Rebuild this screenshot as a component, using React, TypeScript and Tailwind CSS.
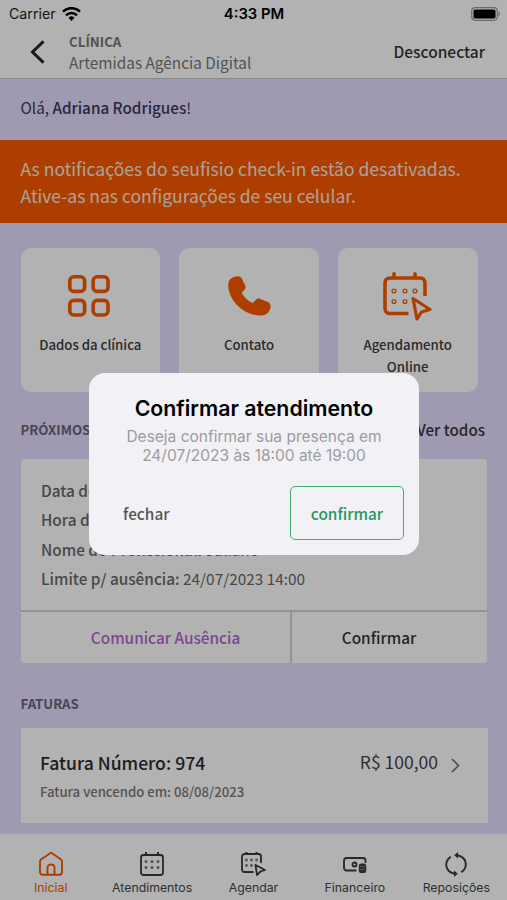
import React from "react";

const sans = "font-['Noto_Sans_CJK_JP','Noto_Sans_CJK_SC',sans-serif]";
const system = "font-['Inter',sans-serif]";

function Grid() {
  return (
    <svg className="mr-[3px] mb-1" width="42" height="42" viewBox="0 0 42 42" fill="none" stroke="#fa5800" strokeWidth="3.6">
      <rect x="1.8" y="1.8" width="14.8" height="14.6" rx="4" />
      <rect x="25.2" y="1.8" width="14.8" height="14.6" rx="4" />
      <rect x="1.8" y="25.4" width="14.8" height="14.6" rx="4" />
      <rect x="25.2" y="25.4" width="14.8" height="14.6" rx="4" />
    </svg>
  );
}

function Phone() {
  return (
    <svg className="mb-[3px] ml-[2px]" width="43" height="40" viewBox="0 0 43 40" fill="#fa5800">
      <path d="M6.5.8C9.5-.3 12.6.2 13.8 2.6l3.4 7c.8 1.700.4 3.300-1 4.600l-2.500 2.300c2.300 4.900 6 8.300 11 10.600l3-3.200c1.300-1.400 2.900-1.700 4.700-1l7.500 3.100c2.300 1 3.100 3.200 2.600 5.400-1 4.700-4.100 7.800-9 8C16.700 40 .6 25.500.2 9.300.1 5 2.500 2.200 6.500.8Z" />
    </svg>
  );
}

function AgendaPointer() {
  return (
    <svg className="mb-[2px]" width="50" height="49" viewBox="0 0 50 49" fill="none" stroke="#fa5800" strokeWidth="3.600" strokeLinecap="round" strokeLinejoin="round">
      <path d="M25.500 41.500H7c-3 0-5-2-5-5V11c0-3 2-5 5-5h30c3 0 5 2 5 5v13" strokeLinecap="butt" />
      <path d="M11 1.800V5M32 1.800V5" />
      <g strokeWidth="1.300">
        <circle cx="11" cy="19" r="1.900" /><circle cx="22" cy="19" r="1.900" /><circle cx="32" cy="19" r="1.900" />
        <circle cx="11" cy="29.500" r="1.900" /><circle cx="22" cy="29.500" r="1.900" />
      </g>
      <path d="M30 26.500 47 37.500 38.500 40 34 47Z" strokeWidth="3.200" />
    </svg>
  );
}

function HomeIcon() {
  return (
    <svg width="24" height="24" viewBox="0 0 24 24" fill="none" stroke="#fa5800" strokeWidth="1.900" strokeLinejoin="round">
      <path d="M1 9.500c0-.8.3-1.500 1-2L11 1.200c.6-.4 1.400-.4 2 0l9 6.300c.7.500 1 1.200 1 2V20c0 1.700-1 2.700-2.700 2.700H3.700C2 22.700 1 21.700 1 20Z" />
      <path d="M8.500 22.500V16c0-2 1.300-3.500 3.500-3.500s3.500 1.500 3.500 3.500v6.500" />
    </svg>
  );
}

function CalendarIcon() {
  return (
    <svg width="24" height="24" viewBox="0 0 24 24" fill="none" stroke="#3a3a3a" strokeWidth="1.800">
      <rect x="1" y="3" width="22" height="20" rx="2.500" />
      <path d="M6 0v3M18 0v3" strokeWidth="2" />
      <g fill="#777" stroke="none">
        {[6, 12, 18].map((x) => <React.Fragment key={x}><circle cx={x} cy="9.500" r="1.500" /><circle cx={x} cy="15.500" r="1.500" /></React.Fragment>)}
      </g>
    </svg>
  );
}

function ScheduleIcon() {
  return (
    <svg width="25" height="24" viewBox="0 0 25 24" fill="none" stroke="#3a3a3a" strokeWidth="1.800" strokeLinejoin="round">
      <path d="M12.500 20H3.500C2 20 1 19 1 17.500V4.500C1 3 2 2 3.500 2h14C19 2 20 3 20 4.500V11" />
      <path d="M5.500 0v2M15.500 0v2" strokeWidth="2" />
      <g fill="#777" stroke="none">
        {[5.5, 10.5, 15.5].map((x) => <circle key={x} cx={x} cy="8" r="1.400" />)}
        <circle cx="5.500" cy="13.500" r="1.400" /><circle cx="10.500" cy="13.500" r="1.400" />
      </g>
      <path d="M14.500 13 24 18l-4.500 1.500L16 23Z" />
    </svg>
  );
}

function MoneyIcon() {
  return (
    <svg className="mt-[2px]" width="24" height="16" viewBox="0 0 24 16" fill="none" stroke="#3a3a3a" strokeWidth="1.800">
      <path d="M13.500 13.500H3.500C2 13.500 1 12.500 1 11v-7.500C1 2 2 1 3.500 1H20c1.500 0 2.500 1 2.500 2.500V6" />
      <circle cx="11.500" cy="7.500" r="2" />
      <rect x="15.800" y="6.500" width="7.400" height="9.500" rx="2.600" fill="#3a3a3a" stroke="none" />
      <path d="M17 9.300c1.500.7 3.500.7 5 0M17 12.200c1.500.7 3.500.7 5 0" stroke="#aaa" strokeWidth=".7" />
    </svg>
  );
}

function RefreshIcon() {
  return (
    <svg width="22" height="25" viewBox="0 0 22 25" fill="none" stroke="#3a3a3a" strokeWidth="1.900">
      <path d="M5.800 4.700C-1 9.500-.5 19.500 9.500 21.700M16.200 20.300C23 15.500 22.500 5.500 12.500 3.300" />
      <path d="M13 0V6.400L9.200 3.200ZM9 18.600V25L12.800 21.800Z" fill="#3a3a3a" stroke="none" />
    </svg>
  );
}

function Shortcut({ children, label }: { children: React.ReactNode; label: React.ReactNode }) {
  return (
    <div className="flex h-36 flex-col items-center rounded-[10px] bg-white">
      <div className="flex h-[86px] items-end justify-center pb-[10px]"><div className="flex h-[53px] items-center">{children}</div></div>
      <div className="text-center text-[13.2px] leading-[22px] font-medium text-[#3b3b3d]">{label}</div>
    </div>
  );
}

function Tab({ icon, label, active }: { icon: React.ReactNode; label: string; active?: boolean }) {
  return (
    <div className={`flex flex-col items-center ${active ? "text-[#fa5800]" : "text-[#444]"}`}>
      <div className="mt-4 flex h-7 items-center">{icon}</div>
      <span className="mt-[2px] text-[12.3px] leading-4 whitespace-nowrap">{label}</span>
    </div>
  );
}

export default function App() {
  return (
    <div className={`relative flex h-[900px] w-[507px] flex-col overflow-hidden bg-[#e4ddfe] ${sans}`}>
      <header className="h-[79px] shrink-0 border-b-[1.5px] border-[#c4c4c4] bg-white">
        <div className={`grid h-7 grid-cols-3 items-center pr-[6px] pl-[9px] ${system}`}>
          <div className="flex items-center gap-[6px] text-[14.2px] text-[#222]">
            Carrier
            <svg width="19" height="14" viewBox="0 0 19 14" fill="none" stroke="black" strokeWidth="2.600">
              <path d="M1 4.700a12 12 0 0 1 17 0M4 8.300a7.800 7.800 0 0 1 11 0" /><path d="m9.500 14-3-3.200a4.300 4.300 0 0 1 6 0Z" fill="black" stroke="none" />
            </svg>
          </div>
          <div className="-ml-[2px] text-center text-[14.8px] font-semibold whitespace-nowrap">4:33 PM</div>
          <svg className="justify-self-end" width="30" height="14" viewBox="0 0 30 14">
            <rect x=".7" y=".7" width="25.600" height="12.600" rx="3.500" fill="none" stroke="#999" strokeWidth="1.200" />
            <rect x="2.500" y="2.500" width="22" height="9" rx="1.500" /><path d="M27.500 4.500c2 1 2 4 0 5Z" fill="#999" />
          </svg>
        </div>
        <div className="flex h-12 items-center pr-[22px] pl-[30px]">
          <svg width="15" height="24" viewBox="0 0 15 24" fill="none" stroke="#252525" strokeWidth="3"><path d="M13.500 1.300 2.500 12l11 10.700" /></svg>
          <div className="ml-6 flex-1 text-[#777]">
            <div className="text-[13.3px] leading-5 font-bold">CLÍNICA</div>
            <div className="text-[15.35px] leading-5">Artemidas Agência Digital</div>
          </div>
          <div className="text-[15.5px] font-medium text-[#333]">Desconectar</div>
        </div>
      </header>

      <p className="h-[61px] shrink-0 pt-[17px] pl-[20.5px] text-[15.25px] leading-[22px] text-[#3d365d]">Olá, <b className="font-medium">Adriana Rodrigues</b>!</p>

      <div className="h-[83px] shrink-0 bg-[#fa5800] pt-[15px] pl-[20.5px] text-[17.5px] leading-[27px] whitespace-nowrap text-[#f7e9df]">
        As notificações do seufisio check-in estão desativadas.<br />Ative-as nas configurações de seu celular.
      </div>

      <section className="mt-[25px] grid shrink-0 grid-cols-3 gap-[19px] pr-[29.5px] pl-[20.5px]">
        <Shortcut label="Dados da clínica"><Grid /></Shortcut>
        <Shortcut label="Contato"><Phone /></Shortcut>
        <Shortcut label={<>Agendamento<br />Online</>}><AgendaPointer /></Shortcut>
      </section>

      <div className="mt-[25px] flex h-[26px] shrink-0 items-center justify-between pr-[22px] pl-[20.5px]">
        <h2 className="text-[13.2px] font-bold text-[#68647a]">PRÓXIMOS</h2>
        <span className="mb-px text-[15.2px] font-medium text-[#37343d]">Ver todos</span>
      </div>

      <article className="mr-5 ml-[21px] mt-4 h-[204px] shrink-0 rounded-[4px] bg-white">
        <div className="h-[151px] pt-[17px] pl-5 text-[15.35px] leading-[29.3px] text-[#676769]">
          <p><b className="font-medium">Data do atendimento:</b> 24/07/2023</p>
          <p><b className="font-medium">Hora do atendimento:</b> 18:00</p>
          <p><b className="font-medium">Nome do Profissional:</b> Juliano</p>
          <p><b className="font-medium">Limite p/ ausência:</b> 24/07/2023 14:00</p>
        </div>
        <div className="flex h-[53px] border-t-2 border-[#d5d5d5] text-[15.35px] font-medium">
          <div className="flex w-[271px] items-center justify-center border-r-2 border-[#d5d5d5] pl-5 text-[#b565cc]">Comunicar Ausência</div>
          <div className="flex flex-1 items-center justify-center pr-[21px] text-[#333]">Confirmar</div>
        </div>
      </article>

      <h2 className="mt-[31px] shrink-0 pl-[20.5px] text-[13.2px] leading-[20px] font-bold text-[#68647a]">FATURAS</h2>
      <article className="mt-[14px] mr-[19.5px] ml-[20.5px] flex h-[95px] shrink-0 bg-white pl-[19.5px]">
        <div className="flex-1 pt-[21px]">
          <p className="text-[17.6px] leading-[27px] font-medium text-[#2c2c2c]">Fatura Número: 974</p>
          <p className="mt-[6px] text-[13.15px] leading-5 font-medium text-[#777]">Fatura vencendo em: 08/08/2023</p>
        </div>
        <div className="mt-[21px] mr-[27.5px] flex h-[27px] items-center gap-[13px] text-[17.5px] text-[#444]">
          R$ 100,00
          <svg className="mt-[6px]" width="9" height="15" viewBox="0 0 9 15" fill="none" stroke="#666" strokeWidth="1.500"><path d="m1 1 6.500 6.500L1 14" /></svg>
        </div>
      </article>

      <nav className={`mt-auto grid h-[66px] shrink-0 grid-cols-5 bg-white ${system}`}>
        <Tab icon={<HomeIcon />} label="Inicial" active />
        <Tab icon={<CalendarIcon />} label="Atendimentos" />
        <Tab icon={<ScheduleIcon />} label="Agendar" />
        <Tab icon={<MoneyIcon />} label="Financeiro" />
        <Tab icon={<RefreshIcon />} label="Reposições" />
      </nav>

      <div className="absolute inset-0 bg-black/30" />
      <div role="dialog" className="absolute top-[373px] left-[89px] flex h-[182px] w-[330px] flex-col rounded-[16px] bg-[#f2f1f6]">
        <h1 className={`mt-[21px] text-center text-[21.3px] leading-[28px] font-semibold text-black ${system}`}>Confirmar atendimento</h1>
        <p className={`mt-[5px] text-center text-[15.5px] leading-[19px] whitespace-nowrap text-[#9c9ca1] ${system}`}>Deseja confirmar sua presença em<br />24/07/2023 às 18:00 até 19:00</p>
        <div className="mt-[21px] flex justify-between pr-[15px] pl-[34px] text-[15.4px] font-medium">
          <button className="pt-px text-[#555]">fechar</button>
          <button className="h-[54px] w-[114px] rounded-[5px] border-[1.5px] border-[#45ad77] pt-px text-[#27995e]">confirmar</button>
        </div>
      </div>
    </div>
  );
}
